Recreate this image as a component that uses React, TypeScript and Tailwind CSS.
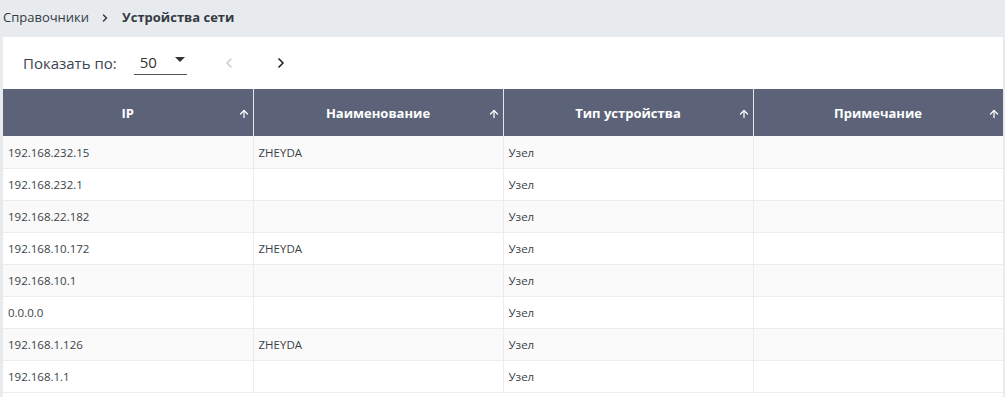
import { ArrowUp, ChevronLeft, ChevronRight } from 'lucide-react';

interface Device {
  ip: string;
  name: string;
  type: string;
  note: string;
}

const devices: Device[] = [
  { ip: '192.168.232.15', name: 'ZHEYDA', type: 'Узел', note: '' },
  { ip: '192.168.232.1', name: '', type: 'Узел', note: '' },
  { ip: '192.168.22.182', name: '', type: 'Узел', note: '' },
  { ip: '192.168.10.172', name: 'ZHEYDA', type: 'Узел', note: '' },
  { ip: '192.168.10.1', name: '', type: 'Узел', note: '' },
  { ip: '0.0.0.0', name: '', type: 'Узел', note: '' },
  { ip: '192.168.1.126', name: 'ZHEYDA', type: 'Узел', note: '' },
  { ip: '192.168.1.1', name: '', type: 'Узел', note: '' },
];

const columns = ['IP', 'Наименование', 'Тип устройства', 'Примечание'];

export default function App() {
  return (
    <div className="w-[1005px] h-[397px] overflow-hidden bg-[#e8ebee] font-['Open_Sans',sans-serif]">
      {/* breadcrumbs */}
      <div className="h-[37px] flex items-center pl-[3px] pb-[1px] text-[13px] text-[#333a44]">
        <span>Справочники</span>
        <ChevronRight className="w-3 h-3 ml-[10px] mr-[11px] text-[#333a44]" strokeWidth={3} />
        <span className="font-bold">Устройства сети</span>
      </div>

      <div className="ml-[3px] w-[1000px] h-full bg-white">
        {/* pagination */}
        <div className="h-[52px] flex items-center pl-[20px] text-[15px] text-[#3d4450]">
          <span>Показать по:</span>
          <div className="ml-[17px] w-[53px] h-[24px] flex items-center justify-between border-b border-[#555] pl-[6px] pr-[2px]">
            <span className="text-[15px] text-[#333]">50</span>
            <span className="w-0 h-0 border-l-[5px] border-r-[5px] border-t-[5px] border-l-transparent border-r-transparent border-t-[#333] mb-[6px]" />
          </div>
          <ChevronLeft className="ml-[34px] w-4 h-4 text-[#c5c8cc]" strokeWidth={2} />
          <ChevronRight className="ml-[36px] w-4 h-4 text-[#222]" strokeWidth={2.5} />
        </div>

        {/* table */}
        <table className="w-[999px] table-fixed border-collapse">
          <thead>
            <tr className="bg-[#5c6378] h-[47px]">
              {columns.map((col) => (
                <th
                  key={col}
                  className="relative w-[250px] border-r border-[#e4e6ea] text-center text-[13px] font-bold text-white pt-[2px]"
                >
                  {col}
                  <ArrowUp className="absolute right-[3px] top-[19px] w-3 h-3 text-white" strokeWidth={2.5} />
                </th>
              ))}
            </tr>
          </thead>
          <tbody>
            {devices.map((d, i) => (
              <tr
                key={i}
                className={`h-[32px] border-b border-[#ececec] text-[11.5px] text-[#3a3f47] ${i % 2 === 0 ? 'bg-[#fafafa]' : 'bg-white'}`}
              >
                <td className="px-[5px] pt-[1px] border-r border-[#ececec]">{d.ip}</td>
                <td className="px-[5px] pt-[1px] border-r border-[#ececec]">{d.name}</td>
                <td className="px-[5px] pt-[1px] border-r border-[#ececec]">{d.type}</td>
                <td className="px-[5px] pt-[1px] border-r border-[#ececec]">{d.note}</td>
              </tr>
            ))}
          </tbody>
        </table>
      </div>
    </div>
  );
}
